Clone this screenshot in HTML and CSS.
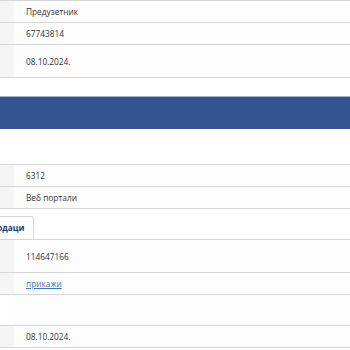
FILE: index.html
```html
<!DOCTYPE html>
<html lang="sr">

<head>
    <meta charset="UTF-8">
    <meta name="viewport" content="width=device-width, initial-scale=1.0">
    <title>Подаци</title>
    <link rel="stylesheet" href="styles.css">
</head>

<body>
    <div class="page">
        <!-- general info -->
        <div class="info">
            <div class="row"><div class="label"></div><div class="value">Предузетник</div></div>
            <div class="row"><div class="label"></div><div class="value">67743814</div></div>
            <div class="row tall"><div class="label"></div><div class="value">08.10.2024.</div></div>
        </div>

        <div class="section-bar"></div>

        <!-- activity -->
        <div class="info activity">
            <div class="row"><div class="label"></div><div class="value">6312</div></div>
            <div class="row"><div class="label"></div><div class="value">Веб портали</div></div>
        </div>

        <div class="tabs">
            <span class="tab active">Подаци</span>
        </div>

        <div class="info">
            <div class="row tall"><div class="label"></div><div class="value">114647166</div></div>
            <div class="row"><div class="label"></div><div class="value"><a href="#" class="link">прикажи</a></div></div>
            <div class="row spacer empty"><div class="label"></div><div class="value"></div></div>
            <div class="row"><div class="label"></div><div class="value">08.10.2024.</div></div>
        </div>
    </div>
</body>

</html>
```

FILE: styles.css
```css
body {
    margin: 0;
    background: #fff;
    color: #333;
    font-family: "Open Sans", Arial, sans-serif;
    font-size: 8.3px;
    overflow: hidden;
}

.page {
    margin-left: -120px;
}

.info {
    border-bottom: 1px solid #d6d6d6;
}

.row {
    display: grid;
    grid-template-columns: 134px 1fr;
    height: 22px;
    border-top: 1px solid #d6d6d6;
    box-sizing: border-box;
}

.row.tall {
    height: 33px;
}

.row.spacer {
    height: 31px;
}

.label {
    background: #f5f5f5;
}

.empty .label {
    background: #fff;
}

.value {
    display: flex;
    align-items: center;
    padding-left: 12px;
    background: #fdfdfd;
}

.section-bar {
    margin-top: 18px;
    height: 33px;
    background: #35548f;
    border-top: 1px solid #9fb3d6;
    box-sizing: border-box;
}

.activity {
    margin-top: 35px;
}

.tabs {
    margin-top: 7px;
    display: flex;
    padding-left: 102px;
}

.tab {
    display: block;
    height: 23px;
    line-height: 22px;
    padding: 0 8px;
    border: 1px solid #d6d6d6;
    border-bottom: none;
    border-radius: 3px 3px 0 0;
    box-sizing: border-box;
    color: #1f3a6b;
    font-weight: bold;
    background: #fff;
}

.link {
    color: #3f76bd;
    text-decoration: underline;
}
```
